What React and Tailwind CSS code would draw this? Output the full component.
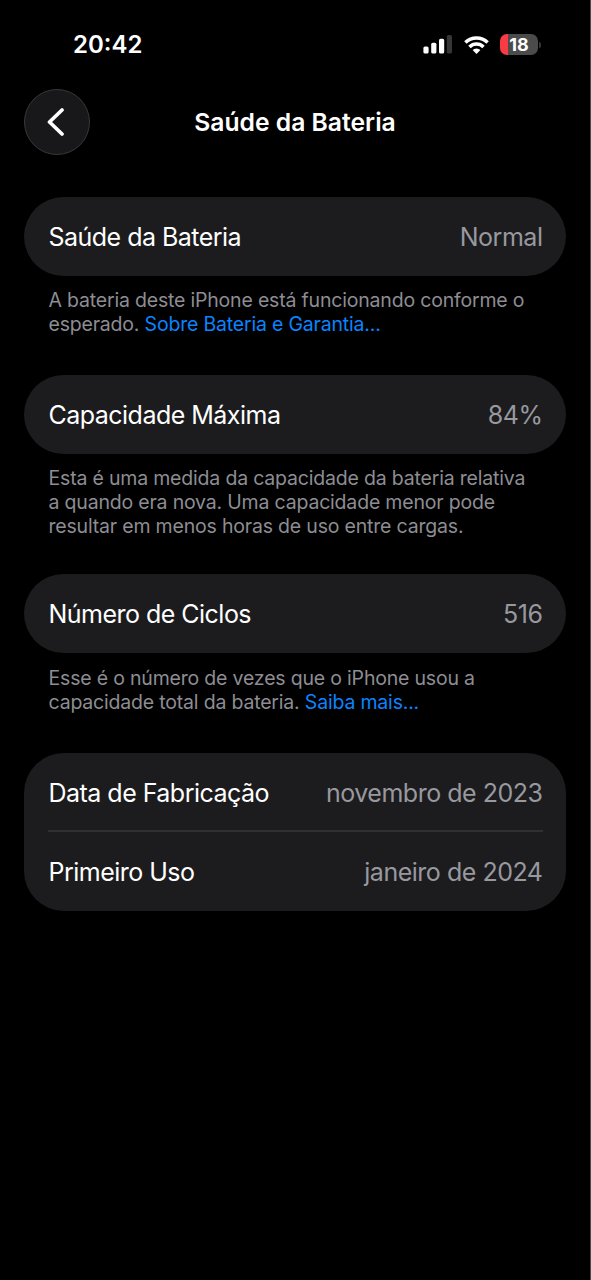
import React from "react";

function SignalIcon() {
  return (
    <svg width="29" height="19" viewBox="0 0 29 19">
      <rect x="0.4" y="11.5" width="5.2" height="7" rx="1.6" fill="#fff" />
      <rect x="8.2" y="7.7" width="5.2" height="10.8" rx="1.6" fill="#fff" />
      <rect x="16" y="3.8" width="5.2" height="14.7" rx="1.6" fill="#fff" />
      <rect x="23.8" y="0" width="5.2" height="18.5" rx="1.6" fill="#363638" />
    </svg>
  );
}

function WifiIcon() {
  return (
    <svg width="25" height="18" viewBox="0 0 25 18" fill="none" stroke="#fff" strokeWidth="3.5">
      <path d="M1.4 6.5a16 16 0 0 1 22.2 0" />
      <path d="M5.5 10.9a10 10 0 0 1 14 0" />
      <path d="M12.5 18l-3.9-4a5.8 5.8 0 0 1 7.8 0z" fill="#fff" stroke="none" />
    </svg>
  );
}

function Battery() {
  return (
    <div className="flex items-center gap-[1px]">
      <div className="flex h-[21px] w-[38px] items-center justify-center rounded-[7px] bg-linear-to-r from-[#f93c43] from-20% to-[#4b4b4c] to-20% text-[18px] font-bold text-white">
        18
      </div>
      <div className="h-[6px] w-[2px] rounded-r-full bg-[#363638]" />
    </div>
  );
}

function Row({ label, value }) {
  return (
    <div className="flex h-[79px] items-center justify-between pt-[2px] text-[25px]">
      <span className="tracking-[-0.52px] text-white">{label}</span>
      <span className="tracking-[-0.48px] text-[#98989f]">{value}</span>
    </div>
  );
}

function Card({ children }) {
  return <div className="rounded-[40px] bg-[#1c1c1e] pr-[23.5px] pl-[24.5px]">{children}</div>;
}

function Note({ children }) {
  return (
    <p className="px-[24.5px] pt-3 text-[19.5px] leading-6 tracking-[-0.19px] whitespace-nowrap text-[#8d8d93]">
      {children}
    </p>
  );
}

function App() {
  return (
    <div className="h-[1280px] w-[591px] overflow-hidden border-r border-[#4a4a4a] bg-black font-['Inter',sans-serif]">
      <div className="flex h-[89px] items-center justify-between pl-[73px] pr-[49px]">
        <span className="text-2xl font-semibold text-white">20:42</span>
        <div className="flex items-center">
          <SignalIcon />
          <div className="mr-[11px] ml-3">
            <WifiIcon />
          </div>
          <Battery />
        </div>
      </div>
      <header className="grid grid-cols-[66px_1fr_66px] items-center px-6">
        <button className="flex size-[66px] items-center justify-center rounded-full border border-[#38383a] bg-[#18181a]">
          <svg className="-ml-[3px]" width="18" height="28" viewBox="0 0 18 28" fill="none" stroke="#fff" strokeWidth="3.7" strokeLinecap="round" strokeLinejoin="round">
            <path d="M15 2L2.5 14L15 26" />
          </svg>
        </button>
        <h1 className="pt-px text-center text-[24.7px] font-semibold text-white">Saúde da Bateria</h1>
      </header>
      <main className="px-6 pt-[42px]">
        <section className="h-[178px]">
          <Card>
            <Row label="Saúde da Bateria" value="Normal" />
          </Card>
          <Note>
            A bateria deste iPhone está funcionando conforme o<br />
            esperado. <a className="text-[#0a84ff]">Sobre Bateria e Garantia...</a>
          </Note>
        </section>
        <section className="h-[199px]">
          <Card>
            <Row label="Capacidade Máxima" value="84%" />
          </Card>
          <Note>
            Esta é uma medida da capacidade da bateria relativa<br />
            a quando era nova. Uma capacidade menor pode<br />
            resultar em menos horas de uso entre cargas.
          </Note>
        </section>
        <section className="h-[179px]">
          <Card>
            <Row label="Número de Ciclos" value="516" />
          </Card>
          <div className="pt-px">
            <Note>
              Esse é o número de vezes que o iPhone usou a<br />
              capacidade total da bateria. <a className="text-[#0a84ff]">Saiba mais...</a>
            </Note>
          </div>
        </section>
        <Card>
          <Row label="Data de Fabricação" value="novembro de 2023" />
          <div className="-mx-[0.5px] -mt-[2px] h-[2px] bg-[#303033]" />
          <Row label="Primeiro Uso" value="janeiro de 2024" />
        </Card>
      </main>
    </div>
  );
}

export default App;
